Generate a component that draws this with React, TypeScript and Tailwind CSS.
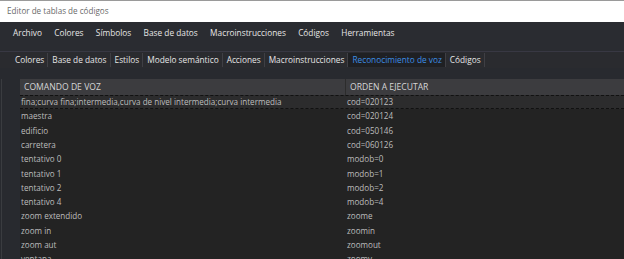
import React from "react";

const menu = ["Archivo", "Colores", "Símbolos", "Base de datos", "Macroinstrucciones", "Códigos", "Herramientas"];
const tabs = ["Colores", "Base de datos", "Estilos", "Modelo semántico", "Acciones", "Macroinstrucciones", "Reconocimiento de voz", "Códigos"];
const rows: [string, string][] = [
  ["fina;curva fina;intermedia,curva de nivel intermedia;curva intermedia", "cod=020123"],
  ["maestra", "cod=020124"],
  ["edificio", "cod=050146"],
  ["carretera", "cod=060126"],
  ["tentativo 0", "modob=0"],
  ["tentativo 1", "modob=1"],
  ["tentativo 2", "modob=2"],
  ["tentativo 4", "modob=4"],
  ["zoom extendido", "zoome"],
  ["zoom in", "zoomin"],
  ["zoom aut", "zoomout"],
  ["ventana", "zoomv"],
];

export default function App() {
  return (
    <div className="w-[624px] h-[259px] overflow-hidden bg-[#2a2c31] flex flex-col" style={{ fontFamily: '"Open Sans", "Noto Sans", sans-serif' }}>
      <div className="h-[22px] shrink-0 bg-white border-t border-[#9a9a9a] flex items-center pl-[7px] text-[8.1px] text-[#6a6a6a]">
        Editor de tablas de códigos
      </div>
      <div className="h-[29px] shrink-0 flex items-center pl-[13px] gap-[12.3px] text-[8.3px] text-[#e6e6e6] pb-[7px]">
        {menu.map((m) => (
          <span key={m}>{m}</span>
        ))}
      </div>
      <div className="h-[17px] shrink-0 border-t border-[#383843] bg-[#2a2b2f] flex items-stretch pl-[11px] text-[8.3px] text-[#e6e6e6]">
        {tabs.map((t, i) => {
          const active = t === "Reconocimiento de voz";
          return (
            <div
              key={t}
              className={`flex items-center pl-[4px] pr-[3px] pt-[1px] my-[1px] ${i > 0 ? "border-l border-[#3f3f44]" : ""} ${active ? "bg-[#1f2023] text-[#3d8fe6]" : ""}`}
            >
              {t}
            </div>
          );
        })}
        <div className="my-[1px] border-l border-[#3f3f44]" />
      </div>
      <div className="flex-1 flex bg-[#282a2f] pt-[11px]">
        <div className="w-[20px] shrink-0 flex">
          <div className="w-[2px] border-r border-[#3a3c40]" />
        </div>
        <div className="flex-1 flex flex-col bg-[#232323]">
          <div className="h-[16px] shrink-0 flex bg-[#3c3c3f] text-[#d6d6d6] text-[8.6px]">
            <div className="w-[326px] pl-[4px] flex items-center border-r border-[#2c2c2c]">COMANDO DE VOZ</div>
            <div className="flex-1 pl-[4px] flex items-center">ORDEN A EJECUTAR</div>
          </div>
          {rows.map(([a, b], i) => (
            <div
              key={i}
              className={`h-[14.3px] shrink-0 flex items-center text-[#bdbdbd] text-[8.1px] ${i === 0 ? "bg-[#2c2c2d] border-y border-dashed border-[#111]" : ""}`}
            >
              <div className="w-[326px] pl-[1px] whitespace-nowrap">{a}</div>
              <div className="flex-1 pl-[1px]">{b}</div>
            </div>
          ))}
        </div>
      </div>
    </div>
  );
}
